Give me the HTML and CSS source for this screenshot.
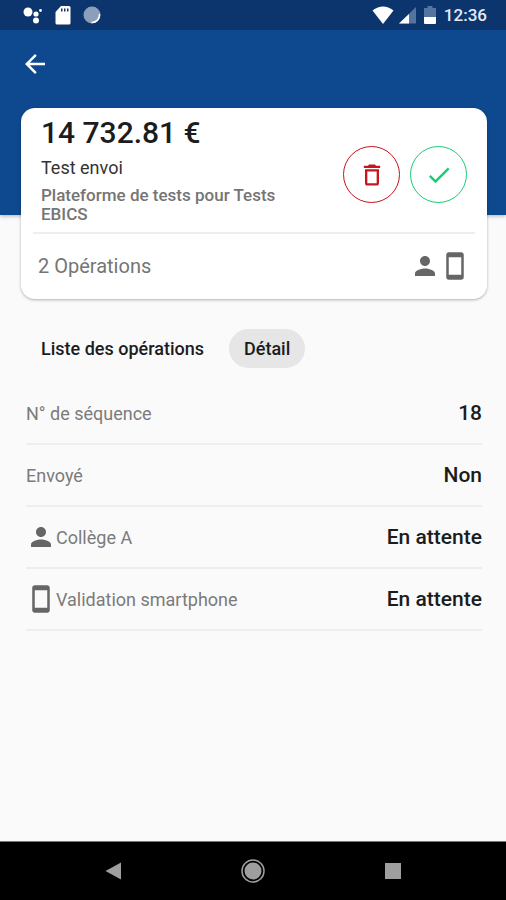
FILE: index.html
```html
<!DOCTYPE html>
<html lang="fr">
<head>
    <meta charset="UTF-8">
    <meta name="viewport" content="width=device-width, initial-scale=1.0">
    <title>Détail</title>
    <link rel="stylesheet" href="styles.css">
</head>
<body>
    <svg class="sprite" aria-hidden="true">
        <symbol id="person" viewBox="0 0 24 24">
            <path d="M12 12c2.21 0 4-1.79 4-4s-1.79-4-4-4-4 1.79-4 4 1.79 4 4 4zm0 2c-2.67 0-8 1.34-8 4v2h16v-2c0-2.66-5.33-4-8-4z"/>
        </symbol>
        <symbol id="phone" viewBox="0 0 24 24">
            <path d="M17 1.01L7 1c-1.1 0-2 .9-2 2v18c0 1.1.9 2 2 2h10c1.1 0 2-.9 2-2V3c0-1.1-.9-1.99-2-1.99zM17 19H7V5h10v14z"/>
        </symbol>
    </svg>

    <header class="header">
        <div class="status-bar">
            <div class="status-left">
                <svg width="20" height="20" viewBox="0 0 20 20" fill="#fff">
                    <circle cx="5" cy="7" r="4.5"/>
                    <circle cx="13" cy="9" r="2.6"/>
                    <circle cx="13" cy="15.5" r="3"/>
                    <circle cx="17.5" cy="5.5" r="1.4"/>
                </svg>
                <svg width="16" height="20" viewBox="0 0 16 20">
                    <path fill="#fff" d="M6 1h8q1.5 0 1.5 1.5v15.5q0 1.5-1.5 1.5H2Q.5 19.5.5 18V7z"/>
                    <path fill="#0b356c" d="M6 3.5h1.500v3H6zM9 3.5h1.500v3H9zM12 3.5h1.500v3H12z"/>
                </svg>
                <svg width="18" height="20" viewBox="0 0 18 20">
                    <circle cx="9" cy="10" r="8.5" fill="#8b9fbb"/>
                    <path d="M16.5 9.5A7.500 7.500 0 0 1 9 17.500" fill="none" stroke="#fff" stroke-width="1.5" stroke-linecap="round"/>
                </svg>
            </div>
            <div class="status-right">
                <svg width="22" height="20" viewBox="0 0 22 20">
                    <path fill="#fff" d="M.5 5.5Q11-2.5 21.5 5.5L11 19z"/>
                </svg>
                <svg width="18" height="20" viewBox="0 0 18 20">
                    <path fill="#54759f" d="M18 2v16.5H1z"/>
                    <path fill="#fff" d="M11 9v9.5H1z"/>
                </svg>
                <svg width="12" height="20" viewBox="0 0 12 20">
                    <path fill="#54759f" d="M3.5 1h5v2H12v9H0V3h3.5z"/>
                    <path fill="#fff" d="M0 12h12v6q0 1-1 1H1q-1 0-1-1z"/>
                </svg>
                <span class="clock">12:36</span>
            </div>
        </div>
        <button class="back" aria-label="Retour">
            <svg width="30" height="30" viewBox="0 0 24 24" fill="#fff"><path d="M20 11H7.830l5.590-5.590L12 4l-8 8 8 8 1.410-1.410L7.830 13H20v-2z"/></svg>
        </button>
    </header>

    <main class="content">
        <section class="card">
            <div class="card-top">
                <div class="card-text">
                    <h1 class="amount">14 732.81 €</h1>
                    <p class="name">Test envoi</p>
                    <p class="platform">Plateforme de tests pour Tests EBICS</p>
                </div>
                <div class="actions">
                    <button class="round delete" aria-label="Supprimer">
                        <svg width="28" height="28" viewBox="0 0 24 24"><path d="M6 19c0 1.1.9 2 2 2h8c1.1 0 2-.9 2-2V7H6v12zM8 9h8v10H8V9zm7.5-5l-1-1h-5l-1 1H5v2h14V4z"/></svg>
                    </button>
                    <button class="round validate" aria-label="Valider">
                        <svg width="28" height="28" viewBox="0 0 24 24"><path d="M9 16.17L4.83 12l-1.42 1.41L9 19 21 7l-1.41-1.41z"/></svg>
                    </button>
                </div>
            </div>
            <div class="card-bottom">
                <span>2 Opérations</span>
                <div class="card-icons">
                    <svg class="icon"><use href="#person"/></svg>
                    <svg class="icon"><use href="#phone"/></svg>
                </div>
            </div>
        </section>

        <div class="tabs">
            <button class="tab">Liste des opérations</button>
            <button class="tab active">Détail</button>
        </div>

        <dl class="details">
            <div class="row">
                <dt>N° de séquence</dt>
                <dd>18</dd>
            </div>
            <div class="row">
                <dt>Envoyé</dt>
                <dd>Non</dd>
            </div>
            <div class="row">
                <dt><svg class="icon"><use href="#person"/></svg>Collège A</dt>
                <dd>En attente</dd>
            </div>
            <div class="row">
                <dt><svg class="icon"><use href="#phone"/></svg>Validation smartphone</dt>
                <dd>En attente</dd>
            </div>
        </dl>
    </main>

    <nav class="nav-bar">
        <button class="nav-button" aria-label="Précédent">
            <svg width="24" height="24" viewBox="0 0 24 24"><path fill="#9e9e9e" d="M20 3.5v17L4.500 12z"/></svg>
        </button>
        <button class="nav-button" aria-label="Accueil">
            <svg width="24" height="24" viewBox="0 0 24 24">
                <circle cx="12" cy="12" r="11" fill="none" stroke="#9e9e9e" stroke-width="1.5"/>
                <circle cx="12" cy="12" r="8.5" fill="#9e9e9e"/>
            </svg>
        </button>
        <button class="nav-button" aria-label="Applications récentes">
            <svg width="24" height="24" viewBox="0 0 24 24"><path fill="#9e9e9e" d="M4 4h16v16H4z"/></svg>
        </button>
    </nav>
</body>
</html>
```
FILE: styles.css
```css
* {
    box-sizing: border-box;
}
body {
    display: flex;
    flex-direction: column;
    min-height: 100vh;
    margin: 0;
    background-color: #fafafa;
    color: #1c1c1c;
    font-family: Roboto, "Liberation Sans", sans-serif;
    font-size: 17px;
}
h1, p, dl, dd {
    margin: 0;
}
button {
    padding: 0;
    border: none;
    background: none;
    color: inherit;
    font: inherit;
    cursor: pointer;
}
svg {
    display: block;
}
.sprite {
    display: none;
}
.icon {
    width: 30px;
    height: 30px;
    fill: #666;
}

/* header */
.header {
    height: 215px;
    background-color: #0e488f;
    box-shadow: 0 1px 4px rgba(0, 0, 0, 0.3);
}
.status-bar {
    display: flex;
    justify-content: space-between;
    align-items: center;
    height: 30px;
    padding: 0 19px 0 23px;
    background-color: #0b356c;
}
.status-left {
    display: flex;
    gap: 12px;
}
.status-right {
    display: flex;
    align-items: center;
    gap: 8px;
}
.status-right svg:first-child {
    margin-right: -4px;
}
.clock {
    color: #e4ebf5;
    font-size: 17px;
    font-weight: 500;
    line-height: 32px;
}
.back {
    margin: 19px 20px;
}

/* card */
.content {
    flex: 1;
}
.card {
    position: relative;
    margin: -107px 19px 0 21px;
    padding: 0 12px;
    border-radius: 14px;
    background-color: #fff;
    box-shadow: 0 1px 3px rgba(0, 0, 0, 0.3);
}
.card-top {
    display: flex;
    align-items: center;
    justify-content: space-between;
    gap: 36px;
    padding: 8px;
    border-bottom: 2px solid #eee;
}
.amount {
    font-size: 30px;
    font-weight: 500;
    line-height: 34px;
}
.name {
    margin: 8px 0;
    font-size: 18px;
    line-height: 20px;
    color: #333;
}
.platform {
    color: #757575;
    font-weight: 500;
    line-height: 19px;
}
.actions {
    display: flex;
    gap: 10px;
    padding-top: 9px;
}
.round {
    display: flex;
    justify-content: center;
    align-items: center;
    width: 57px;
    height: 57px;
    border: 1px solid;
    border-radius: 50%;
}
.round svg {
    fill: currentColor;
}
.delete {
    color: #c8141e;
}
.validate {
    color: #16cf72;
}
.card-bottom {
    display: flex;
    align-items: center;
    justify-content: space-between;
    height: 65px;
    padding: 0 5px 2px;
    color: #757575;
    font-size: 20px;
}
.card-icons {
    display: flex;
}

/* tabs */
.tabs {
    display: flex;
    gap: 10px;
    padding: 30px 26px 0;
}
.tab {
    height: 39px;
    padding: 0 15px;
    border-radius: 20px;
    font-size: 18px;
    font-weight: 500;
}
.tab.active {
    background-color: #e6e6e6;
}

/* details */
.details {
    padding: 15px 24px 0 26px;
}
.row {
    display: flex;
    align-items: center;
    justify-content: space-between;
    height: 62px;
    border-bottom: 2px solid #eee;
}
.row dt {
    display: flex;
    align-items: center;
    color: #7b7b7b;
    font-size: 18px;
}
.row dd {
    font-size: 21px;
    font-weight: 500;
}

/* android buttons */
.nav-bar {
    display: flex;
    justify-content: center;
    height: 59px;
    border-top: 1px solid #777;
    background-color: #000;
}
.nav-button {
    display: flex;
    justify-content: center;
    align-items: center;
    width: 140px;
}
```
